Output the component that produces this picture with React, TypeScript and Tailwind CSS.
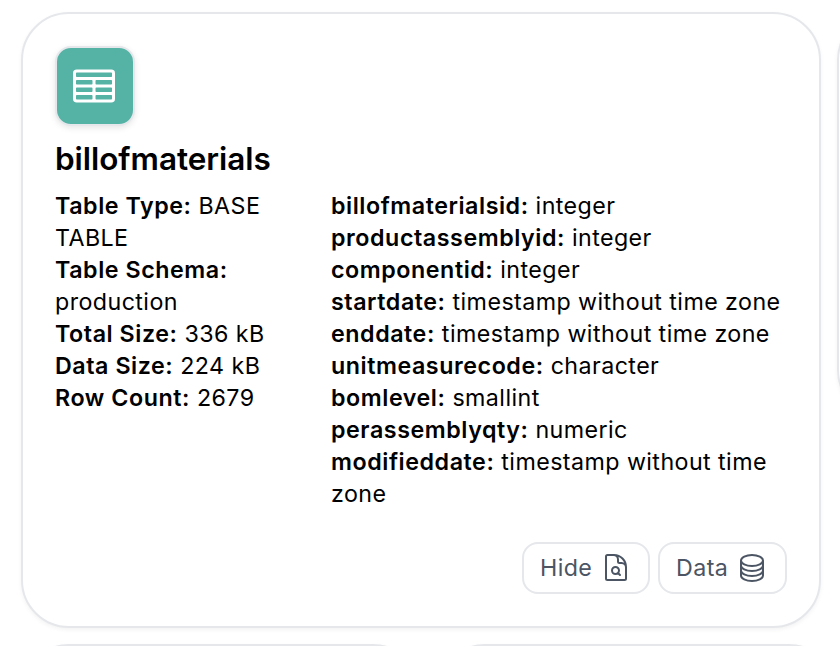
import { HiOutlineTableCells, HiOutlineDocumentMagnifyingGlass, HiOutlineCircleStack } from "react-icons/hi2";

type Field = { name: string; value: string };

const details: Field[] = [
  { name: "Table Type:", value: "BASE TABLE" },
  { name: "Table Schema:", value: "production" },
  { name: "Total Size:", value: "336 kB" },
  { name: "Data Size:", value: "224 kB" },
  { name: "Row Count:", value: "2679" },
];

const columns: Field[] = [
  { name: "billofmaterialsid:", value: "integer" },
  { name: "productassemblyid:", value: "integer" },
  { name: "componentid:", value: "integer" },
  { name: "startdate:", value: "timestamp without time zone" },
  { name: "enddate:", value: "timestamp without time zone" },
  { name: "unitmeasurecode:", value: "character" },
  { name: "bomlevel:", value: "smallint" },
  { name: "perassemblyqty:", value: "numeric" },
  { name: "modifieddate:", value: "timestamp without time zone" },
];

const cardShell = "rounded-[48px] border-2 border-[#e5e7eb] bg-white shadow-[0_2px_4px_0_rgba(0,0,0,0.05)]";

function FieldList({ fields, className }: { fields: Field[]; className: string }) {
  return (
    <ul className={className}>
      {fields.map((f) => (
        <li key={f.name}>
          <span className="font-semibold tracking-[0.55px]">{f.name}</span> {f.value}
        </li>
      ))}
    </ul>
  );
}

export default function App() {
  return (
    <div className="h-[646px] w-[840px] overflow-hidden bg-white pt-3 pl-[21px] font-['Inter','Liberation_Sans',sans-serif] text-black">
      <div className="flex w-[1216px] items-start gap-4">
        <section className={`${cardShell} flex h-[616px] w-[800px] shrink-0 flex-col p-8`}>
          <div className="flex size-20 items-center justify-center rounded-2xl border-2 border-[#e5e7eb] bg-[#55b3a6] pr-0.5 text-white shadow-[0_2px_6px_0_rgba(0,0,0,0.1)]">
            <HiOutlineTableCells className="size-12" />
          </div>
          <h2 className="mt-[13px] h-10 text-[31.5px] leading-10 font-semibold tracking-[-0.04px]">billofmaterials</h2>
          <div className="mt-[11px] flex text-[23.25px] leading-8 tracking-[0.42px]">
            <FieldList fields={details} className="w-[244px]" />
            <FieldList fields={columns} className="ml-8 w-[456px]" />
          </div>
          <div className="mt-8 flex justify-end gap-2 text-[23.25px] leading-8 tracking-[0.4px] text-[#4b5563]">
            <button className="flex h-[52px] w-32 items-center justify-between rounded-2xl border-2 border-[#e5e7eb] px-4">
              Hide
              <HiOutlineDocumentMagnifyingGlass className="size-8" />
            </button>
            <button className="flex h-[52px] w-[129px] items-center justify-between rounded-2xl border-2 border-[#e5e7eb] pr-[17px] pl-4">
              Data
              <HiOutlineCircleStack className="size-8" />
            </button>
          </div>
        </section>
        <section className={`${cardShell} h-[406px] w-[400px] shrink-0`} />
      </div>
      <div className="mt-4 flex gap-4">
        <section className={`${cardShell} h-[300px] w-[400px] shrink-0`} />
        <section className={`${cardShell} h-[300px] w-[400px] shrink-0`} />
      </div>
    </div>
  );
}
